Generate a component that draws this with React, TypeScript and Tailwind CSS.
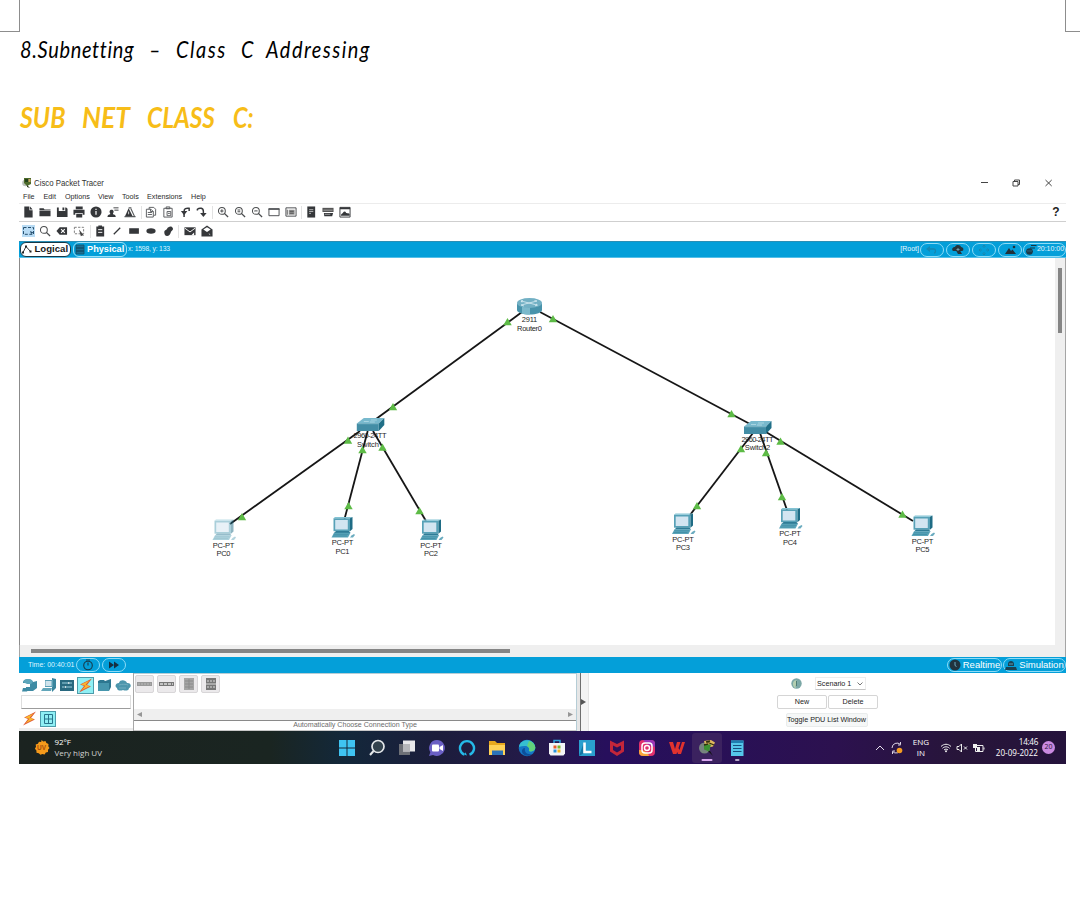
import React from "react";

type IconProps = { children: React.ReactNode; className?: string };

function Tool({ children, className = "" }: IconProps) {
  return (
    <div className={`flex h-[14px] w-[17px] shrink-0 items-center justify-center ${className}`}>
      <svg width="12" height="12" viewBox="0 0 13 13" fill="none" stroke="none">
        {children}
      </svg>
    </div>
  );
}

function Sep({ className = "" }: { className?: string }) {
  return <div className={`h-[13px] w-px shrink-0 bg-[#e2e2e2] ${className}`} />;
}

const K = "#35373a";

function Glass({ sign }: { sign?: string }) {
  return (
    <g stroke="#4a4c4e" strokeWidth="1.1">
      <circle cx="5.3" cy="5.3" r="3.7" />
      <path d="M8 8l4 4" strokeWidth="1.4" />
      {sign && <path d={sign} />}
    </g>
  );
}

function TitleBar() {
  return (
    <div className="flex h-[18px] items-center text-[8.6px] text-[#333]">
      <svg className="ml-[3px]" width="10" height="12" viewBox="0 0 10 12">
        <circle cx="3.5" cy="6" r="3.300" fill="#b9c0b8" />
        <path d="M2 1h7v6l-4 2-3-3z" fill="#4d6a2a" />
        <path d="M3 2h3v3H3z" fill="#20401b" />
        <path d="M6.500 2h2v3h-2z" fill="#c9a565" />
        <path d="M5 8l3 3-3-1z" fill="#28331c" />
      </svg>
      <span className="ml-[2px] w-[80px] origin-left scale-x-[0.91] whitespace-nowrap">Cisco Packet Tracer</span>
      <svg className="ml-auto mr-[13px]" width="73" height="10" viewBox="0 0 73 10" fill="none" stroke="#444" strokeWidth="1">
        <path d="M1 4.500h7" />
        <path d="M33 3.500h5v4.500h-5zM34.500 3.500V2h5v4.500h-1.500" />
        <path d="M65.500 2l6.200 6M71.700 2l-6.200 6" />
      </svg>
    </div>
  );
}

function MenuBar() {
  return (
    <div className="flex h-[11px] items-center whitespace-nowrap pb-px pl-[4px] text-[7.200px] leading-none text-[#2a2a2a]">
      <span className="w-[20.500px]">File</span>
      <span className="w-[21.500px]">Edit</span>
      <span className="w-[33px]">Options</span>
      <span className="w-[24px]">View</span>
      <span className="w-[25px]">Tools</span>
      <span className="w-[44px]">Extensions</span>
      <span>Help</span>
    </div>
  );
}

function ToolbarMain() {
  return (
    <div className="flex h-[19px] items-center border-y border-t-[#ececec] border-b-[#cfcfcf] pb-px pl-[0.500px]">
      <Tool><path d="M2.500 .500h5.500v4H11.500V12.500h-9zM8.700 .500L11.500 3.800H8.700z" fill={K} /></Tool>
      <Tool><path d="M.500 2.500h4.500l1 1.200h6.500v1.200H.5zM.500 5.500h12v5.500h-12z" fill={K} /></Tool>
      <Tool><path d="M1 1.500h2v4h7v-4h1l1.500 1.500v9H1zM7 1.500h2v3H7z" fill={K} /></Tool>
      <Tool><path d="M3 .500h7.500v3H3zM.500 4h12v5.500h-2V7.500h-8v2h-2zM3.500 8.500h6.500V12.500H3.500z" fill={K} /></Tool>
      <Tool>
        <circle cx="6.500" cy="6.500" r="6" fill={K} />
        <path d="M6.500 3v1.400M6.500 5.500v4" stroke="#fff" strokeWidth="1.300" />
      </Tool>
      <Tool>
        <path d="M.500 12c0-2 1.500-2.500 3-3V8c-1.500-2-.5-4 1.500-4s3 2 1.500 4v1c1.500.5 3 1 3 3z" fill={K} />
        <path d="M7 2h5.500M8 4.500h4.500" stroke={K} />
      </Tool>
      <Tool>
        <path d="M1 11.500L5 2.500l4.500 9z" fill={K} />
        <path d="M7.500 3l4 8.500h-3M.500 11.500h12M5 2h3" stroke="#55585a" strokeWidth="1.200" />
        <path d="M5 6v3" stroke="#ddd" />
      </Tool>
      <Sep className="ml-[2px] mr-px" />
      <Tool><path d="M4.500 3.500V1.500h5l2 2v6.500h-2M1.500 3.500h5l2.500 2.500v6h-7.500zM3 7h4.500M3 9.200h4.500M6 3.500v2.500h3" stroke="#55575a" /></Tool>
      <Tool><path d="M2 2.500h9v9.500H2zM4.500 1h4v2h-4zM5.500 6h4v4.500h-4zM6.500 8h2" stroke="#55575a" /></Tool>
      <Tool><path d="M5.500 12V6c0-3 2-4 5.500-3.500v3" stroke={K} strokeWidth="1.600" /><path d="M2 5.500h7L5.500 10z" fill={K} /></Tool>
      <Tool><path d="M1.500 5V3.500C4 1.500 8 2 8 6v3" stroke={K} strokeWidth="1.600" /><path d="M4.500 7.500h7L8 12z" fill={K} /></Tool>
      <Sep className="ml-[1px] mr-[2px]" />
      <Tool><Glass sign="M5.300 3.500v3.600M3.500 5.300h3.600" /></Tool>
      <Tool><Glass sign="M3.800 4.400h3M3.800 6.200h3" /></Tool>
      <Tool><Glass sign="M3.500 5.300h3.600" /></Tool>
      <Tool><path d="M1 3h11v7.500H1z" stroke="#44464a" /><path d="M.500 2.500h12v1.700H.5z" fill="#55575a" /></Tool>
      <Tool><path d="M1 2h11v9H1z" stroke="#44464a" /><path d="M4 4h6.500v5.500H4z" fill="#9a9a9a" /><path d="M5 5.700h4.500M5 7.800h4.500M2.500 4v5.500" stroke="#333" strokeWidth=".8" /></Tool>
      <Sep className="mx-px" />
      <Tool><path d="M2.500 .500h8.500v12H2.500z" fill={K} /><path d="M4.500 4h4.500M4.500 6h4.500M4.500 8h2" stroke="#ddd" strokeWidth=".8" /></Tool>
      <Tool><path d="M.500 2h12v4.500H.5z" fill="#555" /><path d="M2 7.500h10l-1 3.500H2.500z" fill={K} /><path d="M1.500 4.500h10M3 9h6" stroke="#bbb" strokeWidth=".8" /></Tool>
      <Tool>
        <path d="M1 1.500h11v10.500H1z" stroke={K} /><path d="M1 1.500h11v2H1zM2 10.500c0-2 2-2.500 2.500-3.500s2.500-1.500 3 0 3.500 0 4 2v1.500z" fill={K} />
      </Tool>
      <span className="ml-auto mr-[6.500px] text-[12px] font-bold leading-none text-[#222]">?</span>
    </div>
  );
}

function ToolbarDraw() {
  return (
    <div className="flex h-[19px] items-center pb-px pl-[0.500px]">
      <div className="flex h-[13px] w-[17px] shrink-0 items-center justify-center">
        <div className="flex h-[12px] w-[13px] items-center justify-center bg-[#b9dcf5]">
          <svg width="11" height="8" viewBox="0 0 11 8" fill="none">
            <path d="M.5.500h10v6.800H.5z" stroke="#27506f" strokeDasharray="3 1.500" />
            <path d="M7 4l3.500 1.500L8 7z" fill="#27506f" />
          </svg>
        </div>
      </div>
      <Tool><Glass /></Tool>
      <Tool><path d="M.500 6.500L4 2.500h8v8H4z" fill={K} /><path d="M5.500 4.500l4 4M9.500 4.500l-4 4" stroke="#fff" strokeWidth="1.200" /></Tool>
      <Tool><path d="M1.500 2.500h10v7h-10z" stroke="#777" strokeDasharray="2.500 1.500" /><path d="M6.500 5l5.500 6.500-2-.2-1.500 1z" fill="#444" /></Tool>
      <Sep className="ml-[2px] mr-px" />
      <Tool><path d="M2.500 1.500h8.500v11H2.500zM4.700 .500h4v2h-4z" fill={K} /><path d="M4.500 5h4.500M4.500 8h4.500" stroke="#fff" strokeWidth="1" /></Tool>
      <Tool><path d="M3 10l7-7" stroke={K} strokeWidth="1.400" /></Tool>
      <Tool><path d="M1.300 3.500h10.500v6H1.300z" fill={K} /></Tool>
      <Tool><ellipse cx="6.500" cy="6.500" rx="5" ry="2.900" fill={K} /></Tool>
      <Tool><path d="M2.500 8c0-3 2-2 3-4s4.500-3.500 6-1-1.500 3-2 5-2 4-4 4-3-2-3-4z" fill={K} /></Tool>
      <Sep className="mx-px" />
      <div className="w-[2px]" />
      <Tool><path d="M.500 2.500h12v8.500H.5z" fill={K} /><path d="M1 3.500l5.500 4 5.500-4" stroke="#fff" /><path d="M8 11l3-3v3z" fill="#fff" /></Tool>
      <Tool><path d="M.500 5l6-4.500L12.500 5v7.500H.5z" fill={K} /><path d="M2.500 5l4-2.500 4 2.500-4 2.500z" fill="#fff" /><path d="M8.500 9.500l1.500 1" stroke="#ccc" /></Tool>
    </div>
  );
}

function Pill({ children, className = "" }: IconProps) {
  return (
    <div className={`flex h-[14px] shrink-0 items-center justify-center rounded-full border border-[#8edcf7] ${className}`}>
      {children}
    </div>
  );
}

function ViewBar() {
  return (
    <div className="flex h-[17px] items-center bg-[#049fd9] text-white shadow-[inset_0_1px_0_#2b8fb5,inset_0_-1px_0_#55bfe8]">
      <div className="ml-[1px] flex h-[15px] w-[51px] items-center rounded-[6px] border border-[#173746] bg-white text-[9.600px] font-bold text-[#171717]">
        <svg width="12" height="11" viewBox="0 0 12 11" className="shrink-0">
          <path d="M2 8.500L5 2.500l4.500 5" fill="none" stroke="#222" strokeWidth=".9" />
          <path d="M1 7.500h2v2H1zM4 1.500h2v2H4zM8.500 6.500h2v2h-2z" fill="#222" />
        </svg>
        <span className="ml-[1.500px]">Logical</span>
      </div>
      <div className="ml-[2px] flex h-[15px] w-[54px] items-center rounded-[6px] border border-[#9fe2f8] text-[9.200px] font-bold">
        <svg width="10" height="11" viewBox="0 0 10 11" className="ml-[1px] shrink-0">
          <path d="M1 1h8v9H1z" fill="#1c6f92" />
          <path d="M1 4h8M1 7h8" stroke="#0d3f55" />
          <path d="M1 1h8v9H1z" fill="none" stroke="#12506a" strokeWidth=".8" />
        </svg>
        <span className="ml-[2px]">Physical</span>
      </div>
      <span className="ml-px whitespace-nowrap text-[6.800px] tracking-[-0.18px] text-[#dff5ff]">x: 1598, y: 133</span>
      <span className="ml-auto text-[7px] text-[#e6f7ff]">[Root]</span>
      <Pill className="ml-px w-[24px]">
        <svg width="14" height="10" viewBox="0 0 14 10" fill="none"><path d="M3 4h6c2 0 2 4 0 4" stroke="#1787b0" strokeWidth="1.300" /><path d="M1 4l4-3v6z" fill="#1787b0" /></svg>
      </Pill>
      <Pill className="ml-[2px] w-[24px]">
        <svg width="14" height="11" viewBox="0 0 14 11"><path d="M2 7C0 5 2 3 4 3c1-3 6-2 6 0 3 0 3 4 1 4z" fill="#26343b" /><path d="M5 6.500h4l2 3.500H7z" fill="#26343b" /><path d="M7 4v3M5.500 5.500h3" stroke="#6d98a8" /></svg>
      </Pill>
      <Pill className="ml-[2px] w-[24px]">
        <svg width="12" height="12" viewBox="0 0 12 12" fill="none" stroke="#1987af" strokeWidth="1"><path d="M6 1v3M6 8v3M1 6h3M8 6h3M4.500 2.500L6 1l1.500 1.500M4.500 9.500L6 11l1.500-1.500M2.500 4.500L1 6l1.500 1.500M9.500 4.500L11 6 9.500 7.500" /></svg>
      </Pill>
      <Pill className="ml-[2px] w-[24px]">
        <svg width="13" height="10" viewBox="0 0 13 10" fill="#22313a"><path d="M1 9l4-6 2 3 1.500-1.500L12 9z" /><circle cx="10" cy="2" r="1.300" /></svg>
      </Pill>
      <Pill className="ml-[1px] w-[43px]">
        <svg width="12" height="12" viewBox="0 0 12 12" className="shrink-0"><circle cx="4.500" cy="7.500" r="3.300" fill="#1d3a48" /><path d="M6 1.500h5.500M5 4h5M1.500 7.500h6" stroke="#173542" /><path d="M2 7h5" stroke="#3c7c96" strokeWidth=".7" /></svg>
        <span className="text-[7px] text-[#e6f7ff]">20:10:00</span>
      </Pill>
    </div>
  );
}

type PcSpec = { x: number; y: number; name: string; faded?: boolean };

const pcs: PcSpec[] = [
  { x: 223.500, y: 519.500, name: "PC0", faded: true },
  { x: 342.500, y: 517, name: "PC1" },
  { x: 431, y: 519.500, name: "PC2" },
  { x: 683, y: 513.500, name: "PC3" },
  { x: 790, y: 508, name: "PC4" },
  { x: 922.500, y: 515.500, name: "PC5" },
];

const links = [
  [522, 312, 376, 419],
  [540, 312, 750, 424],
  [360, 431, 230, 524],
  [367.700, 431, 344.500, 519],
  [373, 431, 426, 521],
  [753, 433, 690, 515],
  [760, 433, 787, 510],
  [766, 432, 913, 521],
];

const arrows = [
  [507.500, 322], [553, 319], [393, 407], [348, 440.500], [362.500, 450], [382.500, 447.500],
  [242, 517], [348.500, 506], [419.500, 511], [731.500, 414], [741, 449], [766, 453],
  [780.500, 441.500], [697, 506], [782, 497], [902.500, 514.500],
];

function Pc({ x, y, name, faded }: PcSpec) {
  return (
    <g>
      <g transform={`translate(${x - 11.500} ${y})`} opacity={faded ? 0.5 : 1}>
        <path d="M2.500 1.200h16.500v13h-16.500z" fill="#57a1b7" />
        <path d="M2.500 1.200L4 0h17.500L19 1.200z" fill="#83c3d4" />
        <path d="M19 1.200L21.500 0v12L19 14.200z" fill="#1f6c85" />
        <path d="M4.200 3h12.600v9.500H4.200z" fill="#d3e5f1" />
        <path d="M5 14h13l1.500 2H3z" fill="#2f7c96" />
        <path d="M3 15.700h16.500l-2.500 4.800H.5z" fill="#5aa5ba" />
        <path d="M3 17.300h14.500M2 19h14" stroke="#3c8aa2" strokeWidth=".7" />
        <path d="M20.500 18.500l2.500-1.500 1 1-2 2.500h-3z" fill="#6aabbf" />
      </g>
      <text x={x} y={y + 28} textLength="21.500">PC-PT</text>
      <text x={x} y={y + 36.600} textLength="14">{name}</text>
    </g>
  );
}

function Switch({ x, y }: { x: number; y: number }) {
  return (
    <g transform={`translate(${x} ${y})`}>
      <path d="M0 5.500L7 0h20.500L22 5.500z" fill="#78b9cd" />
      <path d="M22 5.500L27.500 0v7L22 13z" fill="#206f87" />
      <path d="M0 5.500h22V13H0z" fill="#438da5" />
      <path d="M7 3.500h5M14 2h6M13 4h5" stroke="#b5dce7" strokeWidth=".8" />
      <path d="M1 6h21" stroke="#67abc0" strokeWidth=".6" />
    </g>
  );
}

function Topology() {
  return (
    <svg
      width="1035" height="387" viewBox="20 258 1035 387"
      className="shrink-0 text-[7.500px]"
      fill="#262626" textAnchor="middle"
    >
      <text x="529.500" y="322.300" textLength="15.500">2911</text>
      <text x="529.500" y="330.900" textLength="25">Router0</text>
      <text x="370" y="438.400" textLength="33">2960-24TT</text>
      <text x="368" y="447" textLength="22">Switch</text>
      <text x="757.500" y="441.600" textLength="32">2960-24TT</text>
      <text x="757.500" y="450.400" textLength="25.500">Switch2</text>
      {links.map(([a, b, c, d], i) => (
        <line key={i} x1={a} y1={b} x2={c} y2={d} stroke="#161616" strokeWidth="1.800" />
      ))}
      {arrows.map(([x, y], i) => (
        <path key={i} d={`M${x} ${y - 4}l4.200 7.300h-8.400z`} fill="#5dbb46" />
      ))}
      <path d="M517 303.500v6.500c0 2.500 5.500 4.500 12.500 4.500s12.500-2 12.500-4.500v-6.500z" fill="#4893ab" />
      <path d="M522 306v7.500c2 .7 5 1 8 1v-7z" fill="#7bb9cb" />
      <ellipse cx="529.500" cy="303" rx="12.500" ry="5" fill="#72b0c4" />
      <path d="M521 301l16 4M537 301l-16 4M523 300.500l-2 .5 1 1.500M535 305.800l2.500-.7-1.500-1.200M534.500 300.500l2.500.5M521 305l3 1" fill="none" stroke="#dceff5" strokeWidth=".8" />
      <Switch x={356.800} y={418} />
      <Switch x={744} y={421} />
      {pcs.map((p) => <Pc key={p.name} {...p} />)}
    </svg>
  );
}

function Workspace() {
  return (
    <div className="flex h-[399px] flex-col">
      <div className="flex h-[387px] border-l border-[#8b8b8b]">
        <Topology />
        <div className="flex w-[11px] justify-center border-r border-[#a5a5a5] bg-[#efefef] pt-[10px]">
          <div className="h-[65px] w-[4px] bg-[#858585]" />
        </div>
      </div>
      <div className="h-[12px] border-l border-r border-[#a5a5a5] bg-[#efefef] pl-[11px] pt-[4px]">
        <div className="h-[4px] w-[479px] bg-[#858585]" />
      </div>
    </div>
  );
}

function TimeBar() {
  return (
    <div className="flex h-[16px] items-center bg-[#049fd9] text-white">
      <span className="ml-[9px] w-[48px] whitespace-nowrap text-[7px] text-[#dff5ff]">Time: 00:40:01</span>
      <Pill className="w-[24px]">
        <svg width="12" height="12" viewBox="0 0 12 12" fill="none" stroke="#173b4b" strokeWidth="1.100"><circle cx="6" cy="6.500" r="4.300" /><path d="M6 6.500V3.500M4 1h4" /></svg>
      </Pill>
      <Pill className="ml-[2px] w-[24px]">
        <svg width="10" height="8" viewBox="0 0 10 8" fill="#173040"><path d="M0 .500L5 4 0 7.500zM5 .500L10 4 5 7.500z" /></svg>
      </Pill>
      <Pill className="ml-auto w-[55px]">
        <svg width="12" height="12" viewBox="0 0 12 12" className="shrink-0"><circle cx="6" cy="6" r="5.500" fill="#20343e" /><path d="M6 3v3.500l1.500 1" stroke="#6ea9c0" fill="none" /></svg>
        <span className="ml-[2px] text-[9.500px]">Realtime</span>
      </Pill>
      <Pill className="ml-[1px] w-[63px]">
        <svg width="12" height="12" viewBox="0 0 12 12" className="shrink-0"><path d="M3 5c0-4 6-4 6 0v2H3zM1 8h10l1 3H0z" fill="#1b4354" /><path d="M4 5h4" stroke="#5e9db5" /></svg>
        <span className="ml-[2px] text-[9.500px]">Simulation</span>
      </Pill>
    </div>
  );
}

function Bolt() {
  return (
    <svg width="15" height="15" viewBox="0 0 15 15">
      <path d="M14 .500L2 6.500l4 1.500-5 6.500 12-6-4-1.500z" fill="#df5a33" />
      <path d="M11.500 2.500L3 6.500l4.500 1.200-4 4.500 8.500-4.200-4.500-1.300z" fill="#f9b92e" />
    </svg>
  );
}

function Cell({ children, className = "" }: IconProps) {
  return <div className={`flex h-[17px] w-[18.700px] shrink-0 items-center justify-center ${className}`}>{children}</div>;
}

function Palette() {
  return (
    <div className="flex w-[115px] flex-col border-r border-[#a8a8a8]">
      <div className="flex h-[22px] items-center pl-[1.500px] pt-[2px]">
        <Cell>
          <svg width="16" height="14" viewBox="0 0 16 14"><path d="M1 4c1-4 9-4 10 0l4-1v7l-4 3H4V9h4V5H1z" fill="#3e8ba4" /><path d="M1 4c1-4 9-4 10 0l-2 2H5z" fill="#5da6bb" /><path d="M1 10h6l-2 3.500H0z" fill="#3e8ba4" /></svg>
        </Cell>
        <Cell>
          <svg width="16" height="14" viewBox="0 0 16 14"><path d="M11 0l4 1v9l-4 4z" fill="#3a859d" /><path d="M4 2h8v7H4z" fill="#5a9fb5" /><path d="M4.500 3h6v5h-6z" fill="#cfe3ec" /><path d="M2 10h9l-1 3H0z" fill="#62a6ba" /></svg>
        </Cell>
        <Cell>
          <svg width="14" height="11" viewBox="0 0 14 11"><path d="M0 0h14v11H0z" fill="#28687f" /><path d="M2 3h6M6 7h6M2 7h2M9 3h3" stroke="#9ad0e0" /><path d="M8 2l2 1-2 1M6 6L4 7l2 1" fill="#fff" /></svg>
        </Cell>
        <Cell>
          <div className="flex h-[17px] w-[17px] items-center justify-center border border-[#4c9cab] bg-[#8feff4]"><Bolt /></div>
        </Cell>
        <Cell>
          <svg width="15" height="12" viewBox="0 0 15 12"><path d="M1 2l2-1h4l1 1 6-2v8l-2 4H1z" fill="#2d7790" /><path d="M1 4h11v8H1z" fill="#4696ad" /></svg>
        </Cell>
        <Cell>
          <svg width="16" height="11" viewBox="0 0 16 11"><path d="M2 8C-1 6 1 3 4 3c1-4 7-3 8 0 4-.5 5 4 2 5 0 3-4 3-6 2-2 1-6 1-6-2z" fill="#4c96ac" /><path d="M4 5c3-1 7-1 9 0M4 8h7" stroke="#70adbf" fill="none" /></svg>
        </Cell>
      </div>
      <div className="ml-[2px] h-[14px] w-[110px] border border-[#dedede] border-b-[#9c9c9c] bg-white" />
      <div className="flex h-[19px] items-center pl-[1px]">
        <Cell><Bolt /></Cell>
        <Cell>
          <div className="flex h-[16px] w-[16px] items-center justify-center border border-[#4c9cab] bg-[#8feff4]">
            <svg width="9" height="10" viewBox="0 0 9 10" fill="none" stroke="#28748c" strokeWidth="1"><path d="M.500.500h8v9h-8zM4.500 1v8M1 5h7" /></svg>
          </div>
        </Cell>
      </div>
      <div className="h-[3px] bg-[#ededed]" />
    </div>
  );
}

function Chip({ children }: IconProps) {
  return (
    <div className="flex h-[18px] w-[19px] items-center justify-center rounded-[2px] border border-[#d8d6d8] bg-[#ebe9eb]">
      <svg width="15" height="12" viewBox="0 0 15 12">{children}</svg>
    </div>
  );
}

function Connections() {
  return (
    <div className="flex w-[443px] flex-col border-r border-t border-[#b5cdd6]">
      <div className="flex h-[35px] items-start gap-[3px] pl-[1px] pt-[1px]">
        <Chip><path d="M0 4h15v4H0z" fill="#999" /><path d="M1 6h13" stroke="#bbb" strokeWidth="1" strokeDasharray="2 1" /></Chip>
        <Chip><path d="M0 4h15v4H0z" fill="#777" /><path d="M1 6h13" stroke="#ddd" strokeWidth="1.300" strokeDasharray="3 1" /></Chip>
        <Chip><path d="M3 0h10v12H3z" fill="#a5a5a5" /><path d="M4 3h8M4 6h8M4 9h8M8 1v10" stroke="#8b8b8b" /></Chip>
        <Chip><path d="M3 0h10v12H3z" fill="#777" /><path d="M4 3h8M4 9h8" stroke="#bbb" strokeWidth="1.500" strokeDasharray="2 1" /><path d="M3 6h10" stroke="#ddd" /></Chip>
      </div>
      <div className="flex h-[12px] items-center justify-between border-b border-[#8a8a8a] bg-[#efefef] px-[3px] text-[#969696]">
        <svg width="5" height="5" viewBox="0 0 5 5" fill="currentColor"><path d="M5 0v5L0 2.500z" /></svg>
        <svg width="5" height="5" viewBox="0 0 5 5" fill="currentColor"><path d="M0 0v5l5-2.500z" /></svg>
      </div>
      <div className="flex h-[9px] items-center justify-center text-[7.100px] leading-none text-[#6c6c6c]">
        <span className="whitespace-nowrap">Automatically Choose Connection Type</span>
      </div>
      <div className="h-px bg-[#c9c9c9]" />
    </div>
  );
}

function Scenario() {
  return (
    <div className="flex flex-1 justify-end pr-[188px] text-[7.200px] text-[#222]">
      <div className="flex w-[101px] flex-col items-center pt-[4px] leading-none">
        <div className="flex h-[13px] w-full items-center pl-[14px]">
          <svg width="11" height="11" viewBox="0 0 11 11"><circle cx="5.500" cy="5.500" r="5.200" fill="#7ba7a6" /><path d="M3 3c2-2 4 0 3 2S4 8 5 10c-3 0-4-5-2-7z" fill="#b4ceb0" /><path d="M5.500 3v5" stroke="#4f7b73" /></svg>
          <div className="ml-[13px] flex h-[13px] w-[51px] items-center border border-[#ededed] border-b-[#c5c5c5] pl-[1px]">
            <span className="whitespace-nowrap">Scenario 1</span>
            <svg className="ml-auto mr-[2px]" width="6" height="4" viewBox="0 0 6 4" fill="none" stroke="#777"><path d="M.500.500L3 3 5.500.500" /></svg>
          </div>
        </div>
        <div className="mt-[5px] flex w-full gap-[1px]">
          <div className="flex h-[14px] w-[50px] items-center justify-center rounded-[2px] border border-[#d5d5d5] bg-white">New</div>
          <div className="flex h-[14px] w-[50px] items-center justify-center rounded-[2px] border border-[#d5d5d5] bg-white">Delete</div>
        </div>
        <div className="mt-[4px] flex h-[14px] w-[82px] -translate-x-px items-center justify-center whitespace-nowrap rounded-[2px] border border-[#e9ecec] bg-[#f5f7f7]">Toggle PDU List Window</div>
      </div>
    </div>
  );
}

function DevicePanel() {
  return (
    <div className="flex h-[58px] bg-white">
      <Palette />
      <Connections />
      <div className="w-[4px] border-r border-[#6e6e6e] bg-[#e6e6e6]" />
      <div className="flex w-[8px] items-center border-r border-[#e4e4e4] bg-[#f3f3f3]">
        <svg width="5" height="6" viewBox="0 0 5 6" fill="#555"><path d="M0 0v6l5-3z" /></svg>
      </div>
      <Scenario />
    </div>
  );
}

function Slot({ children, active }: { children: React.ReactNode; active?: boolean }) {
  return (
    <div className={`flex h-[30px] w-[30px] shrink-0 items-center justify-center ${active ? "rounded-[3px] bg-[#3b225f]" : ""}`}>
      <svg width="18" height="26" viewBox="0 -4 18 26">{children}</svg>
    </div>
  );
}

function Taskbar() {
  return (
    <div className="flex h-[33px] items-center bg-[linear-gradient(90deg,#1b2320_0%,#1a2521_24%,#13283a_31%,#1c1d3c_40%,#241a49_49%,#270f5c_56%,#281058_65%,#2c114f_78%,#271539_90%,#25133c_100%)] font-['Open_Sans',sans-serif] text-white">
      <svg className="ml-[14px] shrink-0" width="17" height="17" viewBox="0 0 17 17">
        <path d="M8.500 1l1.800 1.400 2.200-.4.900 2 2.100.9-.2 2.300 1.200 1.800-1.500 1.700v2.200l-2.200.7-1.200 1.900-2.200-.6-2 .9-1.600-1.600-2.300-.4-.1-2.300-1.500-1.700 1.100-2-.3-2.300 2.200-.8 1.100-2 2.200.4z" fill="#f59a1b" />
        <text x="8.500" y="11" fontSize="6.500" fontWeight="bold" textAnchor="middle" fill="#a74d0d" className="font-['Liberation_Sans',sans-serif]">UV</text>
      </svg>
      <div className="ml-[4.500px] flex w-[54px] flex-col whitespace-nowrap text-[8px] leading-[10.500px]">
        <span className="tracking-[-0.1px]">92°F</span>
        <span className="text-[#d2d4d3]">Very high UV</span>
      </div>
      <div className="ml-[223.500px] flex">
        <Slot><path d="M1 1h7.500v7.500H1zM9.500 1H17v7.500H9.500zM1 9.500h7.500V17H1zM9.500 9.500H17V17H9.500z" fill="#3fc4f2" /></Slot>
        <Slot><circle cx="10" cy="7.500" r="6" fill="#33434e" stroke="#e4e8ea" strokeWidth="1.700" /><path d="M5.500 12L2 16" stroke="#e4e8ea" strokeWidth="2" /></Slot>
        <Slot><path d="M1 5h11v11H1z" fill="#6d7076" /><path d="M5 1.500h12v11H5z" fill="#e8e8ea" /><path d="M5 5h7v7.500H5z" fill="#b6b7ba" /></Slot>
        <Slot><path d="M9 1a8 8 0 1 1-4 15l-4 1 1.300-3.800A8 8 0 0 1 9 1z" fill="#6a5fc4" /><rect x="4" y="5.500" width="7" height="7" rx="1" fill="#fff" /><path d="M11.500 8l3.500-2v6l-3.500-2z" fill="#fff" /></Slot>
        <Slot><path d="M6.500 15.700A7 7 0 1 1 11.500 15.700" fill="none" stroke="#25b9e8" strokeWidth="2.400" /><path d="M6.500 15.700l1-2.500 1.500 3.300z" fill="#25b9e8" /></Slot>
        <Slot><path d="M1 2h6l2 2h8v12H1z" fill="#e8a81e" /><path d="M1 6h16v10H1z" fill="#ffd257" /><path d="M4 11.500h11V16H4z" fill="#2b73b8" /></Slot>
        <Slot><circle cx="9" cy="9" r="8.300" fill="#1577c5" /><path d="M1 8C2-1 17-1 17.300 9c-.3 3-4 4-6.500 3 1.500-3-1-5-4-5-2 0-4 .5-5.800 1z" fill="#36bfd0" /><path d="M11 2c5 1 7 6 6 8-1 2-4 3-6.200 2 1.200-2 .2-4-1.800-5z" fill="#62d37a" /><path d="M7 9c-1 4 2 7 7 6-3 3-9 2-10-2-.5-2 1-4 3-4z" fill="#0d4f9a" /></Slot>
        <Slot><path d="M6 4V1.500h6V4" fill="none" stroke="#2fa3db" strokeWidth="1.500" /><path d="M1 4h16v10.500l-1.500 2h-13L1 14.500z" fill="#f3f4f6" /><path d="M5.500 6.500h3v3h-3z" fill="#e85b2a" /><path d="M9.500 6.500h3v3h-3z" fill="#7ab52a" /><path d="M5.500 10.500h3v3h-3z" fill="#2a94dc" /><path d="M9.500 10.500h3v3h-3z" fill="#f3b520" /></Slot>
        <Slot><path d="M1 1h16v16H1z" fill="#2a9fce" /><path d="M1 17L6 3v11z" fill="#1475a3" /><path d="M6.500 3.500v9.500h7" fill="none" stroke="#fff" strokeWidth="2.600" /></Slot>
        <Slot><path d="M2 1.500l7 3.500 7-3.500v11L9 17l-7-4.500z" fill="#c3263a" /><path d="M5 6.500L9 8.500l4-2V11l-4 2.500L5 11z" fill="#2b105a" /></Slot>
        <Slot><rect x="1" y="1" width="16" height="16" rx="4" fill="#e1306c" /><path d="M1 11c5 0 9 2 10 6H5a4 4 0 0 1-4-4z" fill="#f9a63a" /><path d="M5 1h8a4 4 0 0 1 4 4v3C13 7 8 5 5 1z" fill="#9b36b7" /><rect x="4" y="4" width="10" height="10" rx="3" fill="none" stroke="#fff" strokeWidth="1.500" /><circle cx="9" cy="9" r="2.500" fill="none" stroke="#fff" strokeWidth="1.400" /></Slot>
        <Slot><path d="M1 3h4l2 7 2-7h3.500l-4 12H5zM9 6l2.500 5L14 3h3l-4 12h-3L8 10z" fill="#e0322e" /></Slot>
        <Slot active><circle cx="6.500" cy="9" r="5.500" fill="#76837f" /><path d="M6 2l7-1 4 2.500-2 4-7 1.500z" fill="#dfb85e" /><path d="M6 5l7 .5-2 7-5-2z" fill="#3c9132" /><path d="M9 3l7 3M8 3l4-1M6 6l4-1" stroke="#31300f" strokeWidth="1.300" /><path d="M10 12l5 5-3-5z" fill="#111" /><rect x="3.500" y="20" width="11" height="2" rx="1" fill="#d9a7f0" /></Slot>
        <Slot><path d="M3 1.500h12.500V17H3z" fill="#55c6ea" /><path d="M3 1.500h12.500v2.500H3z" fill="#1e7daf" /><path d="M5 6.500h8.500M5 9.500h8.500M5 12.500h8.500" stroke="#174f7d" strokeWidth="1.100" /><rect x="7" y="20" width="4.500" height="2" rx="1" fill="#b7a9c8" /></Slot>
      </div>
      <svg className="ml-auto shrink-0" width="10" height="7" viewBox="0 0 10 7" fill="none" stroke="#e6e0ec"><path d="M1 6l4-4 4 4" /></svg>
      <svg className="ml-[5px] shrink-0" width="14" height="14" viewBox="0 0 14 14" fill="none" stroke="#ddd4e6"><path d="M2 7a5 5 0 0 1 8.500-3.500V1M10.500 4H8M11 8a5 5 0 0 1-8.500 2.500V13M2.500 10H5" /><circle cx="9.500" cy="9.500" r="2.800" fill="#f49b20" stroke="none" /></svg>
      <div className="ml-[7px] flex w-[20px] flex-col items-center text-[8px] leading-[10.500px]"><span>ENG</span><span>IN</span></div>
      <svg className="ml-[9px] shrink-0" width="12" height="10" viewBox="0 0 12 10" fill="none" stroke="#eee"><path d="M1 3.500c3-3 7-3 10 0M2.500 5.300c2-2 5-2 7 0M4 7c1.300-1.200 2.700-1.200 4 0" /><circle cx="6" cy="8.300" r="1" fill="#eee" stroke="none" /></svg>
      <svg className="ml-[4px] shrink-0" width="12" height="10" viewBox="0 0 12 10" fill="none" stroke="#eee"><path d="M1 3.500h2L5.500 1v8L3 6.500H1zM8 3.500l3 3M11 3.500l-3 3" /></svg>
      <svg className="ml-[4px] shrink-0" width="13" height="10" viewBox="0 0 13 10" fill="none" stroke="#eee"><path d="M3.500 2.500h7.500v6H3.500zM12 4.500v2" /><path d="M1 1h4v4H1zM5 4h3v4H5z" fill="#eee" stroke="none" /></svg>
      <div className="ml-[9px] flex w-[44px] flex-col items-end whitespace-nowrap text-[8.100px] leading-[10.500px]"><span className="tracking-[-0.300px]">14:46</span><span>20-09-2022</span></div>
      <div className="ml-[4px] mr-[11px] flex h-[13px] w-[13px] items-center justify-center rounded-full bg-[#c98ae0] text-[7px] text-[#2b1438]">20</div>
    </div>
  );
}

export default function App() {
  return (
    <div className="flex h-[913px] w-[1080px] flex-col overflow-hidden bg-white font-['Liberation_Sans',sans-serif]">
      <div className="flex h-[32px] justify-between">
        <div className="w-[20px] border-b border-r border-[#8d8d8d]" />
        <div className="w-[15px] border-b border-l border-[#8d8d8d]" />
      </div>
      <h1 className="ml-[20px] flex h-[34px] scale-y-[1.12] items-center whitespace-nowrap font-['Lato',sans-serif] text-[20px] italic text-black">
        <span className="w-[129px] tracking-[0.650px]">8.Subnetting</span>
        <span className="w-[27px]">–</span>
        <span className="w-[65px] tracking-[1.500px]">Class</span>
        <span className="w-[25px]">C</span>
        <span className="tracking-[1.450px]">Addressing</span>
      </h1>
      <h2 className="ml-[20px] mt-[34px] flex h-[34px] scale-y-[1.090] items-center whitespace-nowrap font-['Lato',sans-serif] text-[26px] font-bold italic text-[#f7bd18]">
        <span className="w-[62px]"><span className="inline-block origin-left scale-x-[0.96]">SUB</span></span>
        <span className="w-[65px]"><span className="inline-block origin-left scale-x-[1.020]">NET</span></span>
        <span className="w-[86px]"><span className="inline-block origin-left scale-x-[0.940]">CLASS</span></span>
        <span><span className="inline-block origin-left scale-x-[0.900]">C:</span></span>
      </h2>
      <main className="ml-[19px] mt-[40px] flex w-[1047px] flex-col">
        <TitleBar />
        <MenuBar />
        <ToolbarMain />
        <ToolbarDraw />
        <ViewBar />
        <Workspace />
        <TimeBar />
        <DevicePanel />
        <Taskbar />
      </main>
    </div>
  );
}
